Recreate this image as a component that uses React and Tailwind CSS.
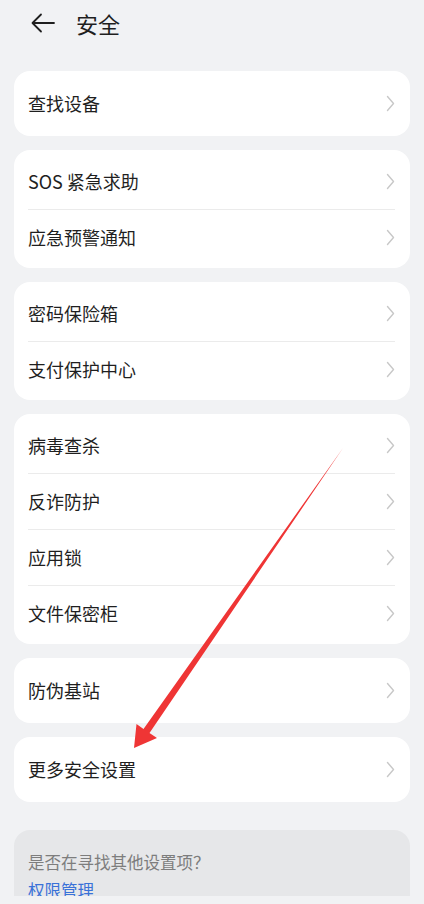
const groups = [
  ["查找设备"],
  ["SOS 紧急求助", "应急预警通知"],
  ["密码保险箱", "支付保护中心"],
  ["病毒查杀", "反诈防护", "应用锁", "文件保密柜"],
  ["防伪基站"],
  ["更多安全设置"],
];

const Chevron = () => (
  <svg width="9" height="17" viewBox="0 0 9 17" fill="none">
    <path d="M1.5 1.5 L7.5 8.5 L1.5 15.5" stroke="#c8c8c8" strokeWidth="1.4" strokeLinecap="round" strokeLinejoin="round" />
  </svg>
);

const Card = ({ items }) => {
  if (items.length === 1) {
    return (
      <div className="bg-white rounded-2xl h-[65px] pl-[14px] pr-[15px] flex items-center justify-between">
        <span className="text-[18px] text-[#1f1f1f]">{items[0]}</span>
        <Chevron />
      </div>
    );
  }
  return (
    <div className="bg-white rounded-2xl py-[3px] pl-[14px] pr-[15px]">
      {items.map((t, i) => (
        <div
          key={t}
          className={
            "h-[56px] flex items-center justify-between " +
            (i > 0 ? "border-t border-[#ebebeb]" : "")
          }
        >
          <span className="text-[18px] text-[#1f1f1f]">{t}</span>
          <Chevron />
        </div>
      ))}
    </div>
  );
};

export default function App() {
  return (
    <div
      className="relative w-[424px] h-[904px] overflow-hidden bg-[#f1f2f4]"
      style={{ fontFamily: '"Noto Sans CJK SC", "Noto Sans", sans-serif' }}
    >
      <div className="h-[896px] overflow-hidden">
        <div className="h-[46px] flex items-center pl-[31px]">
          <svg width="24" height="20" viewBox="0 0 24 20" fill="none">
            <path d="M23 10 H2 M10 1.5 L1.5 10 L10 18.5" stroke="#1f1f1f" strokeWidth="1.8" strokeLinecap="round" strokeLinejoin="round" />
          </svg>
          <span className="ml-[21px] text-[22px] text-[#1f1f1f]">安全</span>
        </div>

        <div className="mt-[25px] px-[14px] flex flex-col gap-[14px]">
          {groups.map((g, i) => (
            <Card key={i} items={g} />
          ))}

          <div className="mt-[14px] bg-[#e6e7e9] rounded-2xl pt-[18px] px-[14px] pb-4 leading-[28px]">
            <div className="text-[16.5px] text-[#7d7d7d]">是否在寻找其他设置项？</div>
            <div className="text-[16.5px] text-[#3a72d8]">权限管理</div>
          </div>
        </div>
      </div>

      <svg className="absolute inset-0 pointer-events-none" width="424" height="904" viewBox="0 0 424 904">
        <polygon
          points="343,448 149.5,733 157,738 134,748 136.5,724 143.5,729"
          fill="#ef3535"
        />
      </svg>
    </div>
  );
}
